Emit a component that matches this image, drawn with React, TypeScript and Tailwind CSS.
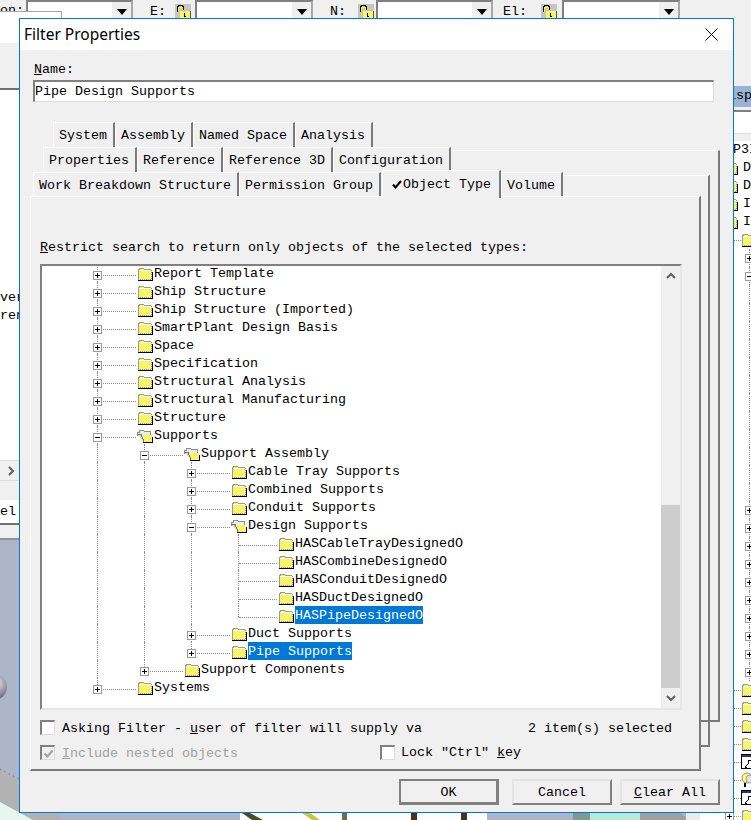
import React from "react";

type Node = { label: string; open?: boolean; leaf?: boolean; selected?: boolean; children?: Node[] };
type Row = Node & { guides: boolean[]; last: boolean };

const tree: Node[] = [
  { label: "Report Template" },
  { label: "Ship Structure" },
  { label: "Ship Structure (Imported)" },
  { label: "SmartPlant Design Basis" },
  { label: "Space" },
  { label: "Specification" },
  { label: "Structural Analysis" },
  { label: "Structural Manufacturing" },
  { label: "Structure" },
  {
    label: "Supports",
    open: true,
    children: [
      {
        label: "Support Assembly",
        open: true,
        children: [
          { label: "Cable Tray Supports" },
          { label: "Combined Supports" },
          { label: "Conduit Supports" },
          {
            label: "Design Supports",
            open: true,
            children: [
              { label: "HASCableTrayDesignedO", leaf: true },
              { label: "HASCombineDesignedO", leaf: true },
              { label: "HASConduitDesignedO", leaf: true },
              { label: "HASDuctDesignedO", leaf: true },
              { label: "HASPipeDesignedO", leaf: true, selected: true },
            ],
          },
          { label: "Duct Supports" },
          { label: "Pipe Supports", selected: true },
        ],
      },
      { label: "Support Components" },
    ],
  },
  { label: "Systems" },
];

function flatten(nodes: Node[], guides: boolean[] = []): Row[] {
  return nodes.flatMap((n, i) => {
    const last = i === nodes.length - 1;
    const row: Row = { ...n, guides, last };
    return [row, ...(n.children ? flatten(n.children, [...guides, !last]) : [])];
  });
}

// checker of single pixels, the old 256 colour folder fill
function dots(x0: number, x1: number, y0: number, y1: number, slant = 0) {
  let d = "";
  for (let y = y0; y < y1; y++) {
    const start = x0 + Math.floor((y - y0) * slant);
    for (let x = start; x < x1; x++) {
      if ((x + y) % 2 === 0) d += `M${x} ${y}h1v1h-1z`;
    }
  }
  return d;
}

const closedDots = dots(2, 15, 4, 13);
const openDots = dots(4, 15, 6, 13, 0.4);
const lockDots = dots(6, 15, 7, 14);

function Folder({ open = false }: { open?: boolean }) {
  if (open) {
    return (
      <svg width="16" height="14" viewBox="0 0 16 14" shapeRendering="crispEdges" className="shrink-0">
        <path d="M0.500 6.500V3.500h2v-2h4l1 1h6v3" fill="#ececec" stroke="#8c8c8c" />
        <path d="M4 6h11v7H7z" fill="#ffff33" />
        <path d={openDots} fill="#ecec9a" />
        <path d="M0 5.500h4l3 7" fill="#d8d8d8" stroke="#707070" />
        <path d="M6 13.500h9.500M15.500 8v6" stroke="#000" />
      </svg>
    );
  }
  return (
    <svg width="16" height="14" viewBox="0 0 16 14" shapeRendering="crispEdges" className="shrink-0">
      <path d="M1.500 12.500V2.500h1v-1h4l1 1h6v1h1v9z" fill="#ffff33" stroke="#999" />
      <path d={closedDots} fill="#ecec9a" />
      <path d="M2 3.500h12" stroke="#fff" />
      <path d="M1 13.500h14.500M15.500 5v9" stroke="#000" />
    </svg>
  );
}

function ExpandBox({ open = false }: { open?: boolean }) {
  return (
    <svg width="9" height="9" viewBox="0 0 9 9" shapeRendering="crispEdges" className="block shrink-0">
      <rect x="0.5" y="0.5" width="8" height="8" fill="#fff" stroke="#9a9a9a" />
      <path d="M2 4.500h5" stroke="#000" />
      {!open && <path d="M4.500 2v5" stroke="#000" />}
    </svg>
  );
}

function TreeRow({ row }: { row: Row }) {
  return (
    <div className="flex h-[18px] items-start pl-[31px]">
      {row.guides.map((on, i) => (
        <div key={i} className="relative h-full w-[47px] shrink-0">
          {on && <div className="absolute inset-y-0 left-[24px] border-l border-dotted border-[#8c8c8c]" />}
        </div>
      ))}
      <div className="relative h-full w-[64px] shrink-0">
        <div
          className={
            row.last
              ? "absolute left-[24px] top-0 h-[11px] border-l border-dotted border-[#8c8c8c]"
              : "absolute inset-y-0 left-[24px] border-l border-dotted border-[#8c8c8c]"
          }
        />
        <div className="absolute left-[25px] top-[11px] w-[38px] border-t border-dotted border-[#8c8c8c]" />
        {!row.leaf && (
          <div className="absolute left-[20px] top-[7px]">
            <ExpandBox open={row.open} />
          </div>
        )}
      </div>
      <div className="mt-[3px] flex">
        <Folder open={row.open} />
      </div>
      <span
        className={
          row.selected
            ? "ml-[1px] h-[18px] whitespace-pre bg-[#0078d7] leading-[20px] text-white"
            : "ml-[1px] h-[18px] whitespace-pre leading-[20px]"
        }
      >
        {row.label}
      </span>
    </div>
  );
}

function Chevron({ dir }: { dir: "up" | "down" | "right" }) {
  const d = dir === "up" ? "M1 7l4-4 4 4" : dir === "down" ? "M1 3l4 4 4-4" : "M3 1l4 4-4 4";
  return (
    <svg width="10" height="10" viewBox="0 0 10 10">
      <path d={d} fill="none" stroke="#606060" strokeWidth="2" />
    </svg>
  );
}

function Tab({ children, selected = false }: { children: React.ReactNode; selected?: boolean }) {
  return (
    <div
      className={
        selected
          ? "relative z-10 -mb-[1px] ml-[1px] flex h-[28px] items-center rounded-tl-[2px] border-t border-l border-white border-r-2 border-r-[#7a7a7a] bg-[#f0f0f0] pl-[9px] pr-[8px]"
          : "flex h-[25px] items-center rounded-tl-[2px] border-t border-l border-white border-r-2 border-r-[#7a7a7a] bg-[#f0f0f0] pl-[5px] pr-[6px] pt-[1px]"
      }
    >
      {children}
    </div>
  );
}

function Check({ checked = false, disabled = false }: { checked?: boolean; disabled?: boolean }) {
  return (
    <div
      className={
        disabled
          ? "flex h-[15px] w-[15px] shrink-0 items-center justify-center border-t-2 border-l-2 border-t-[#808080] border-l-[#808080] border-r border-b border-r-[#dcdcdc] border-b-[#dcdcdc] bg-[#f0f0f0]"
          : "flex h-[15px] w-[15px] shrink-0 items-center justify-center border-t-2 border-l-2 border-t-[#808080] border-l-[#808080] border-r border-b border-r-[#dcdcdc] border-b-[#dcdcdc] bg-white"
      }
    >
      {checked && (
        <svg width="11" height="9" viewBox="0 0 11 9">
          <path d="M1.500 4.500l3 3 5-6" fill="none" stroke="#a0a0a0" strokeWidth="2" />
        </svg>
      )}
    </div>
  );
}

function DialogButton({ children, primary = false }: { children: React.ReactNode; primary?: boolean }) {
  return (
    <div
      className={
        primary
          ? "flex h-[26px] w-[100px] items-center justify-center border-2 border-[#808080] border-r-[3px] border-b-[3px] bg-[#f0f0f0] pt-[2px]"
          : "flex h-[26px] w-[100px] items-center justify-center border-t-2 border-l-2 border-t-[#e4e4e4] border-l-[#e4e4e4] border-r-2 border-b-2 border-r-[#808080] border-b-[#808080] bg-[#f0f0f0] pt-[2px]"
      }
    >
      {children}
    </div>
  );
}

function Lock() {
  return (
    <svg width="16" height="15" viewBox="0 0 16 15" shapeRendering="crispEdges" className="block">
      <rect width="16" height="15" fill="#c6c6c6" />
      <path d="M2.500 7.500V2.500h1v-1h4v1h1v3" fill="none" stroke="#000" />
      <path d="M3.500 7V3h4v3" fill="none" stroke="#ffff00" />
      <rect x="5" y="7" width="10" height="7" fill="#ffff33" />
      <path d={lockDots} fill="#ecec9a" />
      <path d="M15.500 7v8M5 14.500h11" stroke="#555" />
      <path d="M9.500 9v3M9 12.500h2" stroke="#000" />
    </svg>
  );
}

function Combo({ width }: { width: string }) {
  return (
    <div className={`flex h-[24px] shrink-0 justify-end border-t-2 border-l-2 border-r-2 border-t-[#808080] border-l-[#808080] border-r-[#a8a8a8] bg-white ${width}`}>
      <div className="flex h-[22px] w-[19px] justify-center bg-[#f0f0f0] pt-[7px]">
        <svg width="10" height="6" viewBox="0 0 10 6">
          <path d="M0 0h10L5 6z" fill="#000" />
        </svg>
      </div>
    </div>
  );
}

function Toolbar() {
  return (
    <div className="flex h-[18px] shrink-0 items-start overflow-hidden bg-[#f0f0f0]">
      <div className="h-[18px] w-[26px] shrink-0 pt-[3px] leading-[16px]">on:</div>
      <Combo width="w-[107px]" />
      <div className="w-[42px] shrink-0 pl-[17px] pt-[5px] leading-[13px]">E:</div>
      <div className="w-[20px] shrink-0 pt-[4px]"><Lock /></div>
      <Combo width="w-[118px]" />
      <div className="w-[45px] shrink-0 pl-[17px] pt-[5px] leading-[13px]">N:</div>
      <div className="w-[18px] shrink-0 pt-[4px]"><Lock /></div>
      <Combo width="w-[117px]" />
      <div className="w-[48px] shrink-0 pl-[10px] pt-[5px] leading-[13px]">El:</div>
      <div className="w-[21px] shrink-0 pt-[4px]"><Lock /></div>
      <Combo width="w-[118px]" />
    </div>
  );
}

function Scene() {
  return (
    <svg width="700" height="280" viewBox="0 0 700 280" className="block shrink-0">
      <defs>
        <radialGradient id="ball" cx="0.6" cy="0.35" r="0.7">
          <stop offset="0" stopColor="#e8e8f0" />
          <stop offset="0.5" stopColor="#9a9ab0" />
          <stop offset="1" stopColor="#5c5c70" />
        </radialGradient>
      </defs>
      <rect width="700" height="280" fill="#aeb5c8" />
      <path d="M0 229L60 262L60 280H0z" fill="#b2b2b2" />
      <path d="M0 229L19 239" stroke="#6a6a6a" strokeDasharray="1 4" />
      <circle cx="-6" cy="147" r="13" fill="url(#ball)" />
      <path d="M0 262L33 280H0z" fill="#e6f6ef" />
      <rect x="240" y="270" width="247" height="10" fill="#fdfdfd" />
      <path d="M242 273H250L263 280H252z" fill="#4f4a28" />
      <path d="M302 273H310L320 280H312z" fill="#c9c43e" />
      <rect x="342" y="273" width="5" height="7" fill="#6e6e52" />
      <rect x="411" y="273" width="6" height="7" fill="#47341a" />
      <rect x="461" y="273" width="6" height="7" fill="#47341a" />
      <path d="M487 280L505 273H573V280z" fill="#aeb5c8" />
      <rect x="573" y="273" width="17" height="7" fill="#7e9a92" />
      <rect x="590" y="273" width="50" height="7" fill="#b9ead9" />
      <path d="M640 273H680L690 280H640z" fill="#a0a0a0" />
      <rect x="686" y="273" width="14" height="7" fill="#ececec" />
    </svg>
  );
}

const sideRows: { kind: string; text?: string }[] = [
  { kind: "text", text: "P3I" },
  { kind: "item", text: "D" },
  { kind: "item", text: "D" },
  { kind: "item", text: "I" },
  { kind: "item", text: "I" },
  { kind: "folder" },
  { kind: "plus" },
  { kind: "minus" },
  ...Array.from({ length: 12 }, () => ({ kind: "line" })),
  ...Array.from({ length: 10 }, () => ({ kind: "plus" })),
  { kind: "folder" },
  { kind: "folder" },
  { kind: "folder" },
  { kind: "folder" },
  { kind: "doc" },
  { kind: "lens" },
  { kind: "doc" },
  { kind: "folder" },
];

function SideIcon({ kind }: { kind: string }) {
  if (kind === "doc") {
    return (
      <svg width="16" height="16" viewBox="0 0 16 16" shapeRendering="crispEdges" className="shrink-0">
        <rect x="0.500" y="0.500" width="14" height="14" fill="#fff" stroke="#000" />
        <rect x="1" y="1" width="14" height="2" fill="#1c3c78" />
        <path d="M4 13l3-3 1-4h4M4 13h2" fill="none" stroke="#000" />
      </svg>
    );
  }
  if (kind === "lens") {
    return (
      <svg width="16" height="16" viewBox="0 0 16 16" className="shrink-0">
        <circle cx="6" cy="6" r="5" fill="#ffff66" stroke="#8a8a8a" />
        <circle cx="9" cy="7" r="4" fill="#e4e4e4" stroke="#9a9a9a" />
        <path d="M4 11v4" stroke="#000" strokeWidth="2" />
      </svg>
    );
  }
  return <Folder />;
}

function SideTreeRow({ kind, text }: { kind: string; text?: string }) {
  if (kind === "text") {
    return <div className="h-[18px] pl-[33px] leading-[18px]">{text}</div>;
  }
  if (kind === "item") {
    return (
      <div className="flex h-[18px] items-center pl-[22px]">
        <Folder />
        <span className="ml-[5px] leading-[18px]">{text}</span>
      </div>
    );
  }
  if (kind === "line" || kind === "plus" || kind === "minus") {
    return (
      <div className="relative h-[18px]">
        <div className="absolute inset-y-0 left-[49px] border-l border-dotted border-[#8c8c8c]" />
        {kind !== "line" && (
          <div className="absolute left-[45px] top-[5px]">
            <ExpandBox open={kind === "minus"} />
          </div>
        )}
      </div>
    );
  }
  return (
    <div className="flex h-[18px] items-center pl-[25px]">
      <ExpandBox />
      <div className="w-[7px] shrink-0 border-t border-dotted border-[#8c8c8c]" />
      <SideIcon kind={kind} />
    </div>
  );
}

function Background() {
  return (
    <div className="flex h-full flex-col">
      <Toolbar />
      <div className="flex min-h-0 flex-1">
        <div className="flex w-[700px] shrink-0 flex-col">
          <div className="relative -mt-[7px] h-[32px] w-[62px] shrink-0 border-t border-r border-[#a8a8a8] bg-white" />
          <div className="h-[47px] shrink-0 border-b-2 border-[#707070] bg-[#f0f0f0]" />
          <div className="h-[370px] shrink-0 bg-white pt-[199px]">
            <div className="w-[19px] text-right leading-[18px]">ver</div>
            <div className="w-[19px] text-right leading-[18px]">ren</div>
          </div>
          <div className="flex h-[20px] shrink-0 items-center border-t border-[#dcdcdc] bg-[#f0f0f0] pl-[6px]">
            <Chevron dir="right" />
          </div>
          <div className="h-[20px] shrink-0 border-t border-[#dcdcdc] bg-[#f0f0f0]" />
          <div className="h-[25px] shrink-0 border-b-2 border-[#707070] bg-white leading-[24px]">el</div>
          <div className="h-[15px] shrink-0 border-b-2 border-[#909090] bg-[#f0f0f0]" />
          <Scene />
        </div>
        <div className="flex min-w-0 flex-1 flex-col overflow-hidden">
          <div className="h-[68px] shrink-0 bg-[#f0f0f0]" />
          <div className="h-[21px] shrink-0 whitespace-pre bg-[#98b4d4] pl-[28px] leading-[20px]">isp</div>
          <div className="h-[5px] shrink-0 border-b-2 border-[#808080] bg-[#f0f0f0]" />
          <div className="h-[21px] shrink-0 bg-white" />
          <div className="h-[8px] shrink-0 border-t border-[#dcdcdc] bg-[#f0f0f0]" />
          <div className="shrink-0 bg-white">
            {sideRows.map((r, i) => (
              <SideTreeRow key={i} kind={r.kind} text={r.text} />
            ))}
          </div>
        </div>
      </div>
    </div>
  );
}

function Dialog() {
  const rows = flatten(tree);
  return (
    <div className="absolute left-[19px] top-[18px] flex h-[795px] w-[715px] flex-col border border-[#0078d7] bg-[#f0f0f0]">
      <div className="flex h-[31px] shrink-0 items-center justify-between bg-white pl-[4px] pr-[15px]">
        <span className="font-['Noto_Sans',sans-serif] text-[15.5px] text-black">Filter Properties</span>
        <svg width="13" height="13" viewBox="0 0 13 13">
          <path d="M0.500 0.500l12 12M12.500 0.500l-12 12" stroke="#000" fill="none" />
        </svg>
      </div>

      <div className="ml-[13px] mt-[10px] h-[16px] leading-[19px]">
        <span className="ml-[1px]"><u>N</u>ame:</span>
      </div>
      <div className="ml-[13px] mt-[4px] h-[22px] w-[681px] border-t-2 border-l-2 border-t-[#808080] border-l-[#808080] border-r border-b border-r-[#dcdcdc] border-b-[#dcdcdc] bg-white leading-[19px]">
        Pipe Design Supports
      </div>

      <div className="relative ml-[10px] mt-[20px]">
        <div className="absolute left-[13px] top-[28px] h-[572px] w-[677px] border-t border-t-white border-r-2 border-b-2 border-r-[#7a7a7a] border-b-[#7a7a7a]" />
        <div className="absolute left-[3px] top-[53px] h-[572px] w-[677px] border-t border-t-white border-r-2 border-b-2 border-r-[#7a7a7a] border-b-[#7a7a7a]" />

        <div className="relative flex h-[25px] items-end pl-[23px]">
          <Tab>System</Tab>
          <Tab>Assembly</Tab>
          <Tab>Named Space</Tab>
          <Tab>Analysis</Tab>
        </div>
        <div className="relative flex h-[25px] items-end pl-[13px]">
          <Tab>Properties</Tab>
          <Tab>Reference</Tab>
          <Tab>Reference 3D</Tab>
          <Tab>Configuration</Tab>
        </div>
        <div className="relative flex h-[25px] items-end pl-[3px]">
          <Tab>Work Breakdown Structure</Tab>
          <Tab>Permission Group</Tab>
          <Tab selected>
            <svg width="10" height="9" viewBox="0 0 10 9" className="mr-[1px]">
              <path d="M1 4.500l2.500 3L9 1" fill="none" stroke="#000" strokeWidth="2" />
            </svg>
            Object Type
          </Tab>
          <Tab>Volume</Tab>
        </div>

        <div className="relative -mt-[1px] flex h-[575px] w-[671px] flex-col border-t border-l border-t-white border-l-white border-r-2 border-b-2 border-r-[#7a7a7a] border-b-[#7a7a7a] bg-[#f0f0f0] pl-[9px] pt-[42px]">
          <div className="h-[16px] leading-[18px]">
            <u>R</u>estrict search to return only objects of the selected types:
          </div>
          <div className="mt-[9px] flex h-[446px] w-[642px] shrink-0 border-t-2 border-l-2 border-t-[#808080] border-l-[#808080] border-r-2 border-b-2 border-r-[#e6e6e6] border-b-[#e6e6e6] bg-white">
            <div className="min-w-0 flex-1 overflow-hidden">
              <div className="-mt-[2px]">
                {rows.map((r, i) => (
                  <TreeRow key={i} row={r} />
                ))}
              </div>
            </div>
            <div className="flex w-[19px] shrink-0 flex-col bg-[#f0f0f0]">
              <div className="flex h-[20px] items-center justify-center">
                <Chevron dir="up" />
              </div>
              <div className="h-[219px]" />
              <div className="h-[183px] bg-[#cdcdcd]" />
              <div className="flex h-[20px] items-center justify-center">
                <Chevron dir="down" />
              </div>
            </div>
          </div>
          <div className="mt-[10px] flex h-[15px] w-[632px] items-center">
            <Check />
            <span className="ml-[7px] flex-1 whitespace-pre pt-[2px] leading-[16px]">
              Asking Filter - <u>u</u>ser of filter will supply va
            </span>
            <span className="whitespace-pre pt-[2px] leading-[16px]">2 item(s) selected</span>
          </div>
          <div className="mt-[10px] flex h-[15px] items-center">
            <Check checked disabled />
            <span className="ml-[7px] w-[318px] whitespace-pre pt-[2px] leading-[16px] text-[#a0a0a0]">
              <u>I</u>nclude nested objects
            </span>
            <Check />
            <span className="ml-[6px] whitespace-pre pt-[1px] leading-[16px]">
              Lock "Ctrl" <u>k</u>ey
            </span>
          </div>
        </div>

        <div className="mt-[8px] flex w-[690px] justify-end">
          <DialogButton primary>OK</DialogButton>
          <div className="ml-[13px]">
            <DialogButton>Cancel</DialogButton>
          </div>
          <div className="ml-[8px]">
            <DialogButton>
              <span>
                <u>C</u>lear All
              </span>
            </DialogButton>
          </div>
        </div>
      </div>
    </div>
  );
}

export default function App() {
  return (
    <div className="relative h-[820px] w-[751px] overflow-hidden bg-[#f0f0f0] font-['Liberation_Mono',monospace] text-[13.33px] text-black">
      <Background />
      <Dialog />
    </div>
  );
}
